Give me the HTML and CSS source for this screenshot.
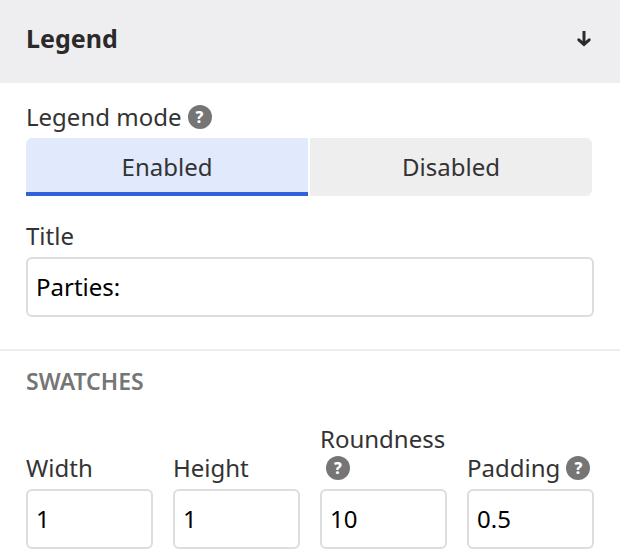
FILE: index.html
```html
<!DOCTYPE html>
<html lang="en">
<head>
  <meta charset="UTF-8">
  <meta name="viewport" content="width=device-width, initial-scale=1.0">
  <title>Legend settings</title>
  <link rel="stylesheet" href="styles.css">
</head>
<body>

  <header class="panel-header">
    <h2 class="panel-title">Legend</h2>
    <button type="button" class="collapse-btn" aria-label="Collapse">
      <svg width="16" height="18" viewBox="0 0 16 18" fill="none" stroke="#2a2a2a" stroke-width="3">
        <path d="M8 1V14"/>
        <path d="M2.8 9.8L8 14.4L13.2 9.8" stroke-linecap="round"/>
      </svg>
    </button>
  </header>

  <main>
    <section class="section">
      <div class="label"><span id="mode-label">Legend mode</span><button type="button" class="help" aria-label="Help">?</button></div>
      <div class="segmented" role="group" aria-labelledby="mode-label">
        <button type="button" class="segment active" aria-pressed="true">Enabled</button>
        <button type="button" class="segment" aria-pressed="false">Disabled</button>
      </div>

      <div class="field">
        <label class="label" for="title">Title</label>
        <input type="text" class="input" id="title" value="Parties:">
      </div>
    </section>

    <section class="section swatches">
      <h3 class="section-title">Swatches</h3>
      <div class="grid">
        <div>
          <label class="label" for="width">Width</label>
          <input type="text" class="input" id="width" value="1">
        </div>
        <div>
          <label class="label" for="height">Height</label>
          <input type="text" class="input" id="height" value="1">
        </div>
        <div>
          <div class="label"><label for="roundness">Roundness</label><button type="button" class="help" aria-label="Help">?</button></div>
          <input type="text" class="input" id="roundness" value="10">
        </div>
        <div>
          <div class="label"><label for="padding">Padding</label><button type="button" class="help" aria-label="Help">?</button></div>
          <input type="text" class="input" id="padding" value="0.5">
        </div>
      </div>
    </section>
  </main>

</body>
</html>
```
FILE: styles.css
```css
* {
  box-sizing: border-box;
}
body {
  margin: 0;
  font-family: "Noto Sans", sans-serif;
  font-size: 24px;
  line-height: 29px;
  color: #333;
  background-color: #fff;
}
button,
input {
  font: inherit;
}
.panel-header {
  display: flex;
  align-items: center;
  justify-content: space-between;
  padding: 24px 28px 30px 26px;
  background-color: #eeeef0;
}
.panel-title {
  margin: 0;
  font-size: 25px;
  font-weight: 700;
  color: #2a2a2a;
}
.collapse-btn {
  display: flex;
  padding: 0;
  border: none;
  background: none;
  cursor: pointer;
}
.section {
  padding: 19px 26px 32px;
}
.label {
  display: block;
  margin-bottom: 7px;
}
/* small round question mark after a label */
.help {
  display: inline-block;
  width: 24px;
  height: 24px;
  margin-left: 6px;
  padding: 0;
  border: none;
  border-radius: 50%;
  background-color: #757575;
  color: #fff;
  font-size: 16px;
  font-weight: 800;
  line-height: 24px;
  text-align: center;
  vertical-align: 3px;
  cursor: pointer;
}
.segmented {
  display: flex;
  gap: 2px;
  margin-right: 2px;
}
.segment {
  flex: 1;
  height: 58px;
  padding: 0 0 2px;
  border: none;
  border-radius: 0 6px 6px 0;
  background-color: #eee;
  color: #333;
  cursor: pointer;
}
.segment.active {
  border-radius: 6px 0 0 0;
  background-color: #e1e9fd;
  box-shadow: inset 0 -4px #3063db;
}
.field {
  margin-top: 25px;
}
.input {
  display: block;
  width: 100%;
  height: 60px;
  padding: 0 8px 2px;
  border: 2px solid #ddd;
  border-radius: 6px;
  background-color: #fff;
  color: #000;
}
.swatches {
  padding: 16px 26px 12px;
  border-top: 2px solid #eee;
}
.section-title {
  margin: 0 0 28px;
  font-size: 23px;
  font-weight: 600;
  text-transform: uppercase;
  color: #757575;
}
.grid {
  display: grid;
  grid-template-columns: repeat(4, minmax(0, 1fr));
  gap: 20px;
  align-items: end;
}
```
